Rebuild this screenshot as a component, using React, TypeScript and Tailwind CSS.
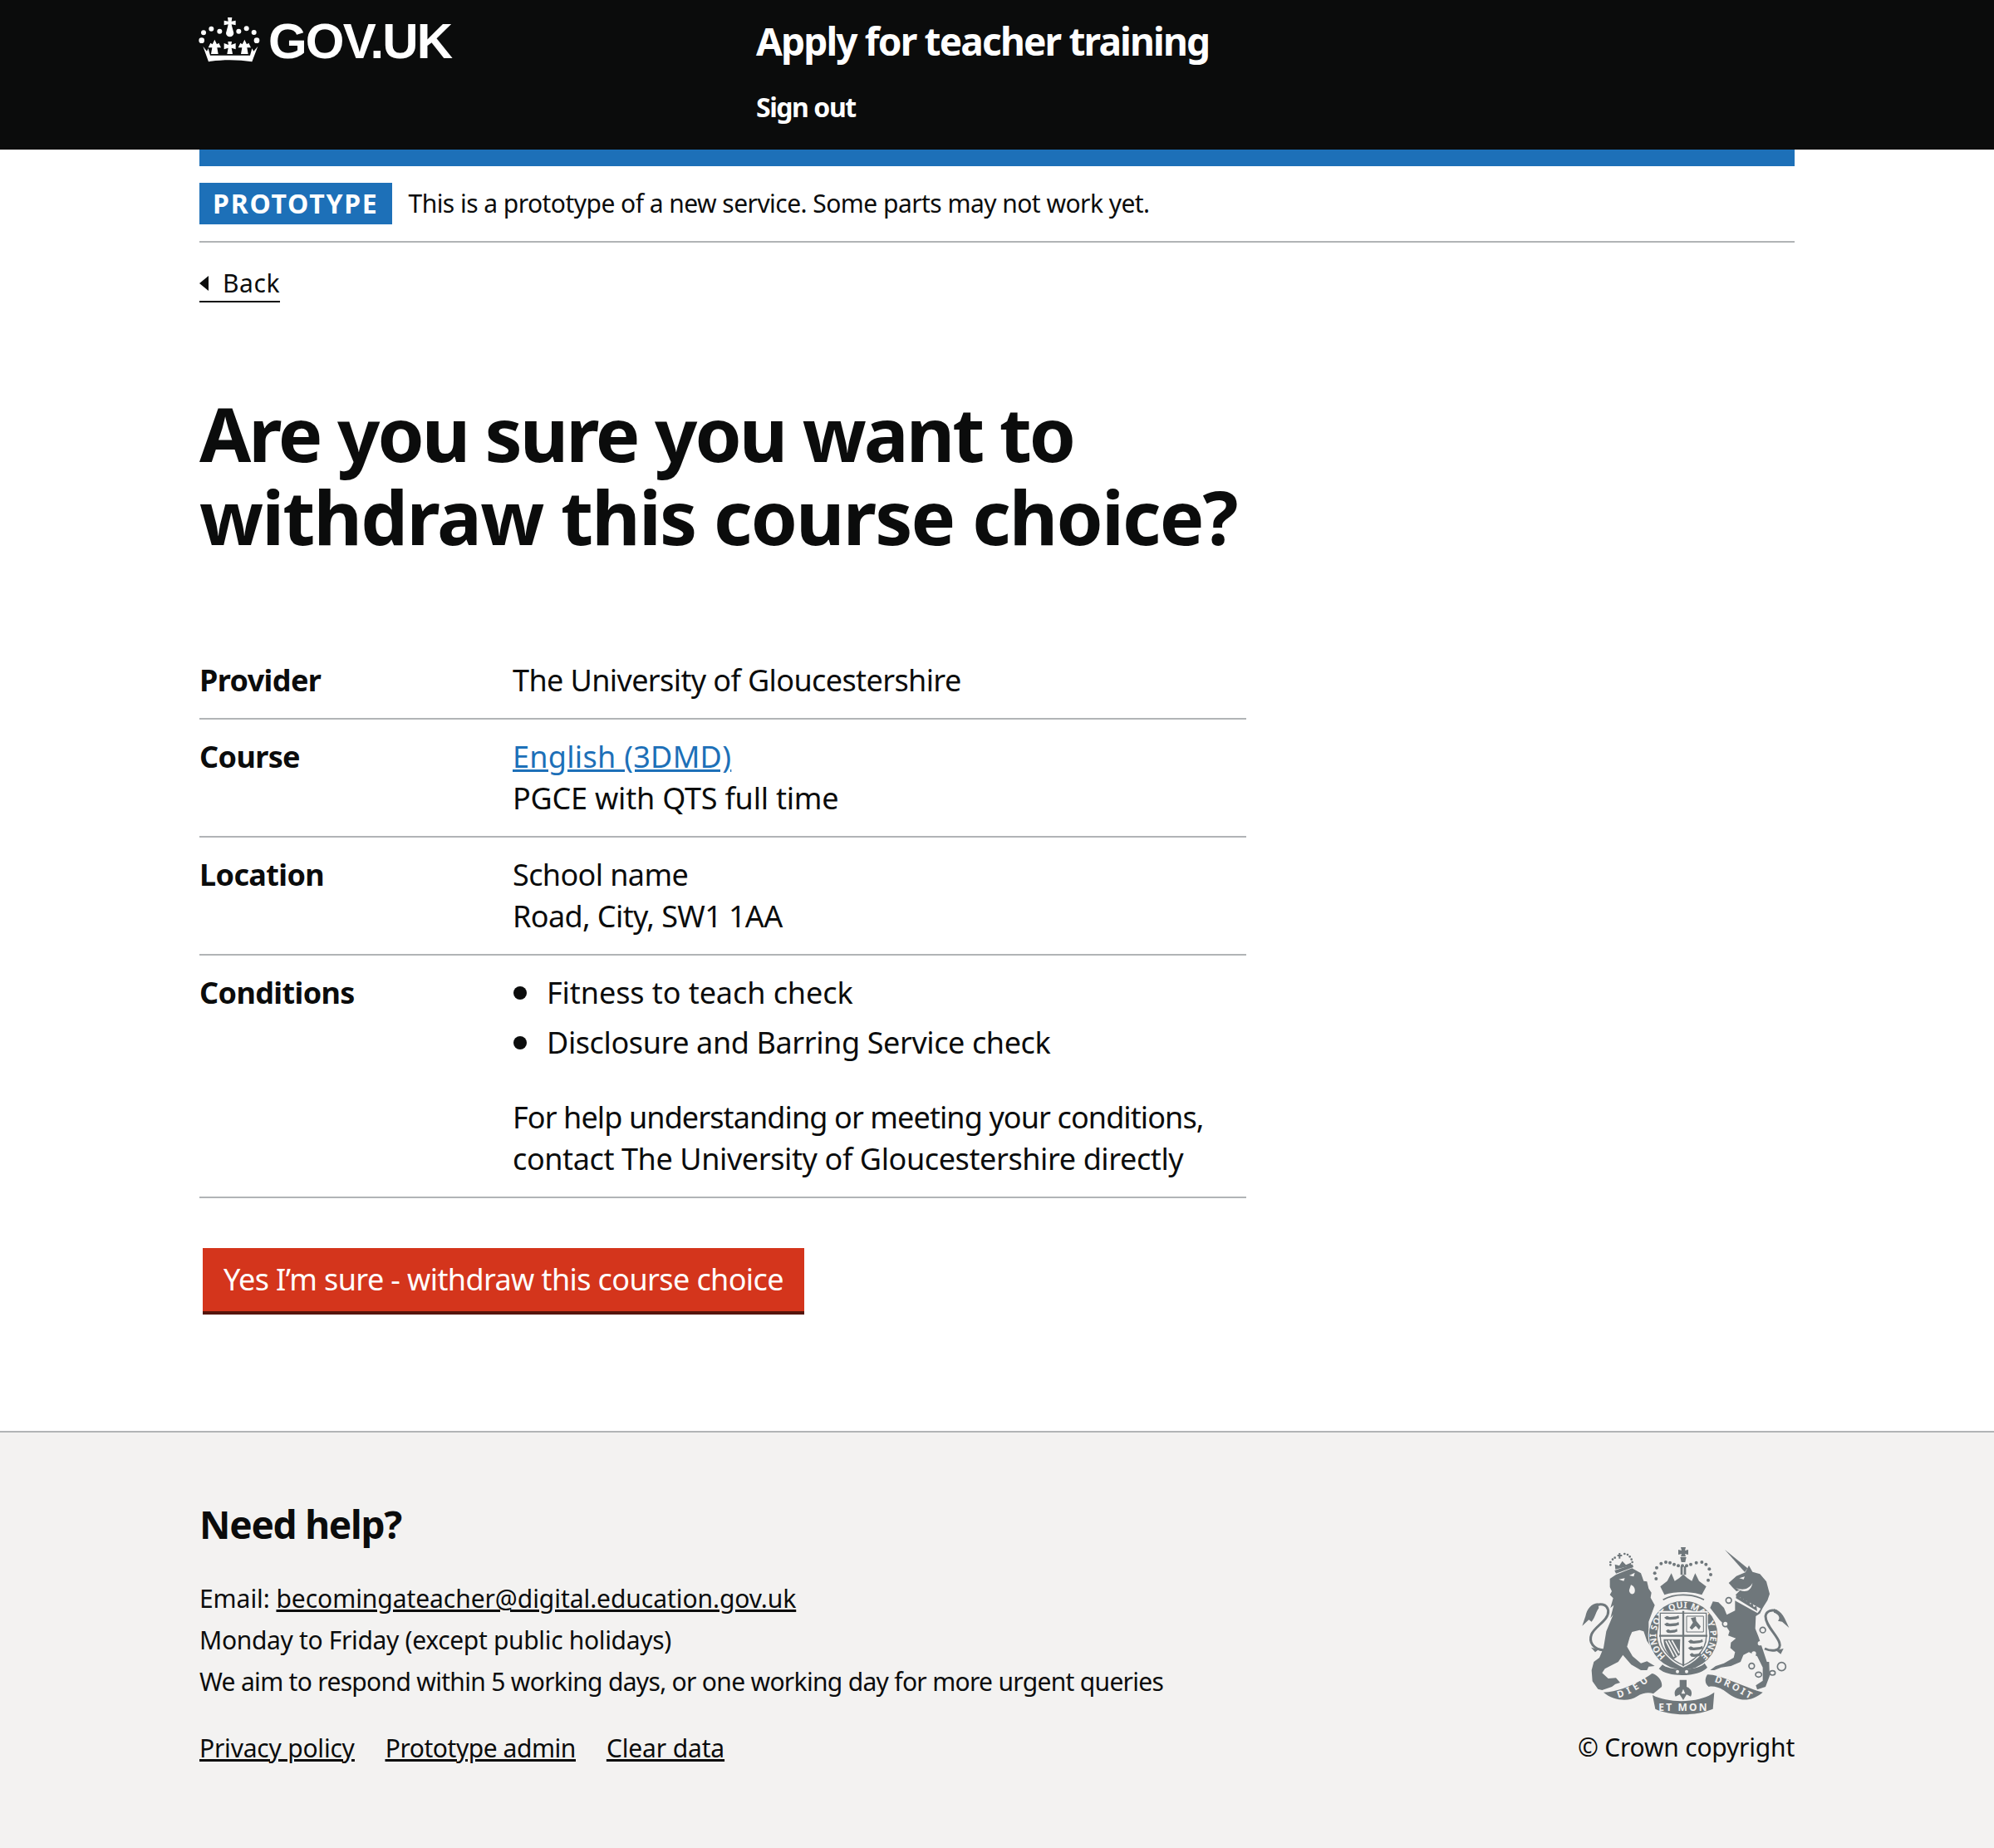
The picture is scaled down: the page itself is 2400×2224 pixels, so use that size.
import type { ReactNode } from "react"

const bgGrey = "#f3f2f1"
const crestFont = "'Noto Sans', sans-serif"

function Crown() {
  return (
    <svg viewBox="0 0 255 195" className="w-[85px] h-[65px] shrink-0 -ml-[5px]" fill="currentColor">
      <circle cx="30" cy="73" r="9" />
      <circle cx="58" cy="59" r="9" />
      <circle cx="88" cy="68" r="9" />
      <circle cx="157" cy="68" r="9" />
      <circle cx="185" cy="58" r="9" />
      <circle cx="212" cy="72" r="9" />
      <circle cx="23" cy="101" r="10" />
      <circle cx="222" cy="101" r="10" />
      <path d="M117 18 H133 L131 32 L146 29 V46 L131 43 L133 52 L139 74 A14 14 0 1 1 111 74 L117 52 L119 43 L104 46 V29 L119 32 Z" />
      <path d="M118 105 H132 L130 117 L146 111 V133 L131 128 L135 150 H115 L119 128 L104 133 V111 L120 117 Z" />
      <path d="M70 98 L78 115 L85 110 L93 127 L79 127 L83 150 H57 L61 127 L47 127 L55 110 L62 115 Z" />
      <path d="M178 98 L186 115 L193 110 L201 127 L187 127 L191 150 H165 L169 127 L155 127 L163 110 L170 115 Z" />
      <path d="M48 178 C95 170 155 170 205 178 L226 122 L211 140 L205 130 L198 155 H54 L47 130 L42 140 L28 122 Z" />
    </svg>
  )
}

function ShieldLions({ x, y }: { x: number; y: number }) {
  return (
    <g transform={`translate(${x} ${y})`}>
      <path d="M2 8 L12 2 L22 6 L46 4 L54 0 L56 10 L44 14 L24 16 L10 15 Z" />
      <path d="M2 32 L12 26 L22 30 L46 28 L54 24 L56 34 L44 38 L24 40 L10 39 Z" />
      <path d="M8 56 L16 50 L24 54 L42 52 L48 48 L50 58 L40 62 L24 64 L14 63 Z" />
    </g>
  )
}

function Crest() {
  return (
    <svg viewBox="0 0 795 630" className="w-[265px] h-[210px] mt-[51px]" fill="#6f777b">
      {/* lion */}
      <path d="M128 120 L150 105 L208 82 L240 100 L250 128 L262 130 L268 155 L278 170 L275 188 L290 215 L268 275 L268 300 L290 325 L310 355 L310 375 L285 378 L262 345 L250 310 L235 305 L208 312 L200 330 L190 365 L210 400 L240 425 L262 418 L290 435 L268 437 L262 450 L240 450 L205 430 L175 395 L158 420 L110 445 L100 460 L122 480 L150 478 L165 495 L148 500 L135 510 L100 522 L85 518 L65 490 L62 450 L70 420 L90 405 L105 370 L115 310 L140 250 L130 262 L142 215 L130 225 L140 190 L128 178 L135 165 L128 150 Z" />
      <path d="M160 122 L182 118 L178 128 Z M198 108 L218 98 L214 112 Z" fill={bgGrey} />
      <path d="M204 142 C216 146 222 160 216 172 C208 180 196 172 198 160 Z" fill={bgGrey} />
      <path d="M105 378 C70 375 50 350 62 320 C75 290 125 270 122 235 C118 210 90 205 70 222" fill="none" stroke="#6f777b" strokeWidth="9" />
      <path d="M85 208 C60 210 45 230 40 255 L28 290 L52 268 L62 275 C75 260 78 238 88 226 Z" />
      <path d="M88 375 L60 368 L75 385 Z" />
      {/* lion crown */}
      <path d="M145 90 L210 68 L213 78 L150 101 Z" />
      <path d="M148 86 L146 68 L162 73 L173 56 L186 70 L204 62 L206 72 Z" />
      <path d="M155 36 H172 M163 27 V47" fill="none" stroke="#6f777b" strokeWidth="6" />
      {[[130, 70], [130, 60], [138, 50], [146, 44], [181, 30], [192, 33], [200, 40], [206, 50], [209, 60]].map(([cx, cy]) => (
        <circle key={`${cx}-${cy}`} cx={cx} cy={cy} r="4" />
      ))}
      {/* unicorn */}
      <g transform="translate(465 0)">
        <path d="M78 15 L160 82 L150 96 Z" />
        <path d="M152 97 L165 72 L178 95 L205 103 L228 130 L240 175 L232 198 L215 225 L205 245 L190 255 L188 300 L200 330 L215 375 L230 420 L238 420 L240 470 L225 510 L195 520 L190 505 L215 488 L215 440 L195 400 L165 385 L145 395 L135 420 L100 435 L65 440 L40 450 L25 450 L45 435 L75 425 L110 405 L115 385 L98 370 L100 350 L118 335 L90 325 L95 310 L85 295 L60 270 L25 225 L35 202 L55 205 L75 225 L85 250 L115 235 L115 215 L115 180 L135 160 L120 165 L105 150 L92 135 L120 110 Z" />
        <path d="M130 118 L150 112 L146 122 Z" fill={bgGrey} />
        <path d="M118 153 C140 162 165 160 178 135 C172 170 145 172 118 153 Z" fill={bgGrey} />
        <path d="M113 176 L208 228 L196 244 L112 197 Z" fill={bgGrey} />
        <path d="M118 190 L120 176 L125 183 L130 178 L134 190 L141 186 L145 194 L152 192 L157 202 L165 198 L170 212 L178 208 L182 222 L192 218 L195 237 Z" />
        <path d="M222 372 C250 385 285 380 275 350 C265 320 225 290 225 255 C228 235 250 230 265 238" fill="none" stroke="#6f777b" strokeWidth="9" />
        <path d="M255 229 C285 235 295 265 310 297 L285 275 L270 272 C282 258 268 246 255 242 Z" />
        <path d="M262 378 L290 372 L280 392 Z" />
        <g fill={bgGrey} stroke="#6f777b" strokeWidth="5">
          <circle cx="92" cy="198" r="10" />
          <circle cx="80" cy="283" r="10" />
          <circle cx="215" cy="305" r="10" />
        </g>
        <g fill="none" stroke="#6f777b" strokeWidth="5">
          <circle cx="175" cy="435" r="10" />
          <ellipse cx="200" cy="466" rx="11" ry="9" />
          <ellipse cx="250" cy="460" rx="10" ry="8" />
          <circle cx="283" cy="437" r="15" />
        </g>
        <circle cx="205" cy="353" r="8" fill={bgGrey} />
        <circle cx="183" cy="390" r="8" fill={bgGrey} />
      </g>
      {/* garter ring */}
      <path id="crest-garter" d="M330 399 A98 98 0 1 1 456 399" fill="none" />
      <circle cx="393" cy="324" r="127" fill={bgGrey} />
      <circle cx="393" cy="324" r="124" />
      <circle cx="393" cy="324" r="94" fill={bgGrey} />
      <text fontSize="32" fontWeight="700" fill={bgGrey} fontFamily={crestFont}>
        <textPath href="#crest-garter" textLength="478" lengthAdjust="spacing">HONI SOIT QUI MAL Y PENSE</textPath>
      </text>
      {/* shield */}
      <path d="M304 236 H482 V330 C482 385 430 425 393 440 C356 425 304 385 304 330 Z" fill={bgGrey} />
      <path d="M310 244 H476 V330 C476 380 428 418 393 432 C358 418 310 380 310 330 Z" fill="none" stroke="#6f777b" strokeWidth="4" />
      <path d="M393 236 V436 M306 326 H480" fill="none" stroke="#6f777b" strokeWidth="7" />
      <ShieldLions x={322} y={252} />
      <ShieldLions x={408} y={338} />
      <path d="M405 255 H466 V312 H405 Z" fill="none" stroke="#6f777b" strokeWidth="3" />
      <path d="M420 262 L438 258 L440 272 L456 292 L450 304 L438 290 L424 304 L416 296 L428 278 Z" />
      <path d="M322 338 H382 L380 395 L358 410 C336 395 322 365 322 338 Z" />
      <path d="M340 342 L372 400 M352 342 L378 388 M330 344 L360 402" fill="none" stroke={bgGrey} strokeWidth="5" />
      {/* royal crown */}
      <path d="M384 6 H402 L399 18 L411 15 V33 L399 30 L402 40 H384 L387 30 L375 33 V15 L387 18 Z" />
      <path d="M382 42 H404 L400 60 H386 Z" />
      <path d="M383 75 H391 V106 H383 Z M395 75 H403 V106 H395 Z" />
      {[[295, 120], [290, 100], [297, 80], [313, 65], [330, 60], [345, 62], [360, 68], [375, 73], [390, 73], [405, 73], [420, 68], [440, 62], [460, 60], [475, 68], [487, 85], [492, 105], [483, 125]].map(([cx, cy]) => (
        <circle key={cx} cx={cx} cy={cy} r="6" />
      ))}
      <path d="M310 148 L335 128 L350 100 L362 128 L378 118 L393 104 L408 118 L424 128 L436 100 L450 128 L476 148 L460 178 C420 165 365 165 325 178 Z" />
      <path d="M320 196 C360 172 425 172 468 196" fill="none" stroke="#6f777b" strokeWidth="5" />
      {/* buckle and motto */}
      <path d="M318 430 C340 452 440 455 470 425 L480 440 C450 475 340 478 305 445 Z" />
      <circle cx="372" cy="455" r="6" fill={bgGrey} />
      <circle cx="405" cy="455" r="6" fill={bgGrey} />
      <path d="M105 530 C170 528 240 490 280 462 C300 465 320 490 315 510 L285 535 C270 530 250 530 225 545 C195 565 140 560 105 530 Z" />
      <path d="M282 540 C340 570 450 570 505 530 L500 590 C430 620 340 612 292 590 Z" />
      <path d="M480 466 C520 462 620 515 680 530 C630 570 590 560 550 530 C530 515 505 505 485 510 C470 500 470 480 480 466 Z" />
      <path id="crest-dieu" d="M158 550 C195 540 235 518 268 490" fill="none" />
      <path id="crest-droit" d="M505 492 C550 505 590 530 630 552" fill="none" />
      <text fontSize="34" fontWeight="700" fill={bgGrey} fontFamily={crestFont}>
        <textPath href="#crest-dieu" textLength="125">DIEU</textPath>
      </text>
      <text fontSize="34" fontWeight="700" fill={bgGrey} fontFamily={crestFont}>
        <textPath href="#crest-droit" textLength="142">DROIT</textPath>
      </text>
      <text x="304" y="598" fontSize="36" fontWeight="700" fill={bgGrey} fontFamily={crestFont} textLength="174">ET MON</text>
      <path d="M380 485 H405 V510 C420 515 428 530 420 545 L405 538 L393 558 L380 538 L365 545 C357 530 365 515 380 510 Z" />
      <path d="M393 518 L400 535 H386 Z" fill={bgGrey} />
    </svg>
  )
}

function SummaryRow({ label, children }: { label: string; children: ReactNode }) {
  return (
    <div className="flex border-b-2 border-[#b1b4b6] py-[20px]">
      <dt className="w-[377px] font-bold">{label}</dt>
      <dd className="flex-1">{children}</dd>
    </div>
  )
}

function Bullet({ children, className }: { children: ReactNode; className?: string }) {
  return (
    <li className={`flex items-center gap-[24px] ${className ?? ""}`}>
      <span className="w-[16px] h-[16px] ml-px rounded-full bg-[#0b0c0c]" />
      {children}
    </li>
  )
}

export default function App() {
  return (
    <div className="font-['Noto_Sans',sans-serif] bg-white text-[#0b0c0c] tracking-[-0.017em] text-[36px] leading-[50px]">
      <header className="bg-[#0b0c0c] text-white h-[180px]">
        <div className="mx-[240px] flex">
          <a className="w-[670px] flex items-start gap-[3px] mt-[15px]">
            <Crown />
            <span className="font-['Liberation_Sans',sans-serif] font-bold text-[60px] leading-[60px] tracking-[-0.03em] mt-[5px]">GOV.UK</span>
          </a>
          <div>
            <div className="font-bold text-[46px] leading-[50px] tracking-[-0.04em] mt-[24px]">Apply for teacher training</div>
            <div className="font-bold text-[32px] leading-[40px] tracking-[-0.045em] mt-[35px]">Sign out</div>
          </div>
        </div>
      </header>

      <div className="mx-[240px]">
        <div className="h-[20px] bg-[#1d70b8]" />
        <div className="flex items-center h-[92px] border-b-2 border-[#b1b4b6] text-[30px] tracking-[-0.018em]">
          <strong className="bg-[#1d70b8] text-white font-bold text-[32px] tracking-[0.055em] h-[50px] leading-[50px] px-[16px] mr-[20px]">PROTOTYPE</strong>
          <span>This is a prototype of a new service. Some parts may not work yet.</span>
        </div>
        <a className="inline-flex items-center mt-[28px] text-[30px] leading-[40px] tracking-[0.02em] border-b-2 border-[#0b0c0c] h-[44px]">
          <span className="w-0 h-0 border-y-[9px] border-y-transparent border-r-[11px] border-r-[#0b0c0c] mr-[17px]" />
          Back
        </a>

        <main className="pt-[107px]">
          <h1 className="text-[90px] leading-[100px] font-bold">
            <span className="block tracking-[-0.033em]">Are you sure you want to</span>
            <span className="block tracking-[-0.02em]">withdraw this course choice?</span>
          </h1>
          <dl className="mt-[103px] w-[1260px]">
            <SummaryRow label="Provider">The University of Gloucestershire</SummaryRow>
            <SummaryRow label="Course">
              <a className="block text-[#1d70b8] underline tracking-[0.008em]">English (3DMD)</a>
              <span className="block tracking-[-0.006em]">PGCE with QTS full time</span>
            </SummaryRow>
            <SummaryRow label="Location">School name<br />Road, City, SW1 1AA</SummaryRow>
            <SummaryRow label="Conditions">
              <ul className="flex flex-col gap-[10px] mb-[40px]">
                <Bullet className="tracking-[-0.002em]">Fitness to teach check</Bullet>
                <Bullet className="tracking-[-0.011em]">Disclosure and Barring Service check</Bullet>
              </ul>
              <span className="block tracking-[-0.025em]">For help understanding or meeting your conditions,</span>
              <span className="block tracking-[-0.011em]">contact The University of Gloucestershire directly</span>
            </SummaryRow>
          </dl>
          <button className="block mt-[60px] ml-[4px] w-[724px] bg-[#d4351c] text-white h-[80px] border-b-4 border-[#55150b] tracking-[-0.017em]">
            Yes I’m sure - withdraw this course choice
          </button>
        </main>
      </div>

      <footer className="mt-[140px] h-[502px] bg-[#f3f2f1] border-t-2 border-[#b1b4b6] text-[30px] leading-[50px]">
        <div className="mx-[240px] flex justify-between pt-[85px]">
          <div>
            <h2 className="text-[46px] leading-[50px] font-bold tracking-[-0.027em]">Need help?</h2>
            <p className="mt-[40px] tracking-[-0.002em]">Email: <a className="underline">becomingateacher@digital.education.gov.uk</a></p>
            <p className="tracking-[-0.011em]">Monday to Friday (except public holidays)</p>
            <p className="tracking-[-0.023em]">We aim to respond within 5 working days, or one working day for more urgent queries</p>
            <div className="flex gap-[37px] mt-[30px] underline">
              <a className="tracking-[-0.007em]">Privacy policy</a>
              <a className="tracking-[-0.015em]">Prototype admin</a>
              <a className="tracking-[-0.005em]">Clear data</a>
            </div>
          </div>
          <div className="flex flex-col items-end">
            <Crest />
            <span className="mt-[8px] tracking-[-0.007em]">© Crown copyright</span>
          </div>
        </div>
      </footer>
    </div>
  )
}
